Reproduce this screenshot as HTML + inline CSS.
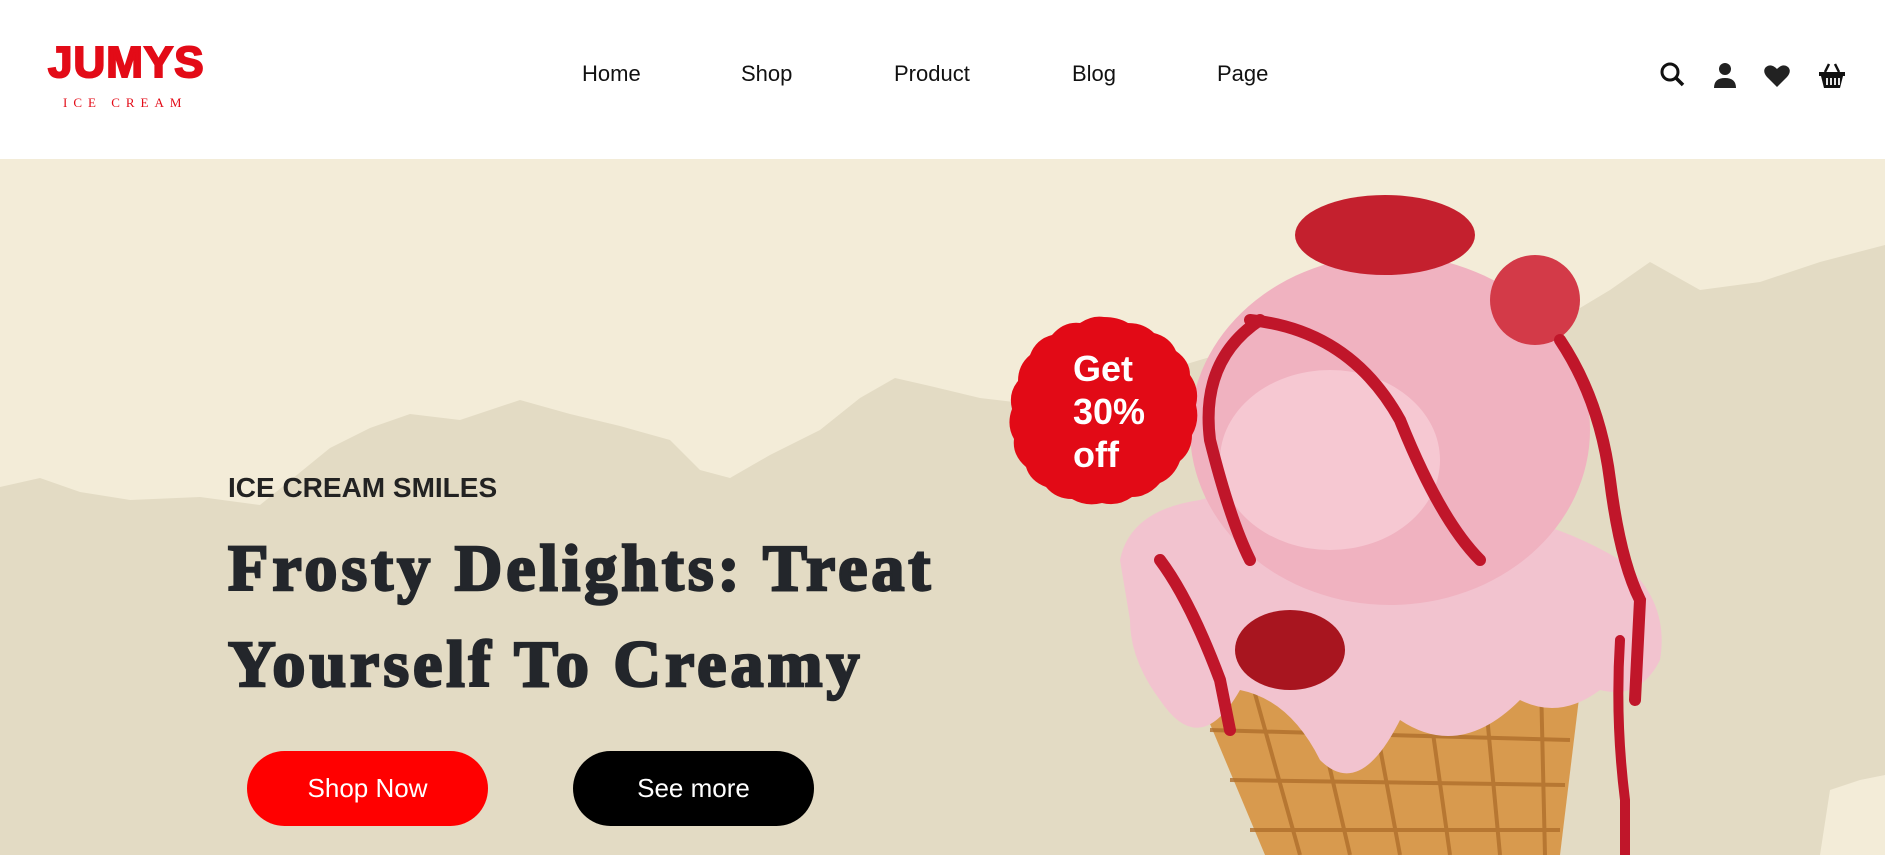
<!DOCTYPE html>
<html><head><meta charset="utf-8"><style>
*{margin:0;padding:0;box-sizing:border-box}
body{width:1885px;height:855px;overflow:hidden;background:#fff;font-family:"Liberation Sans",sans-serif;position:relative}
.hdr{position:absolute;left:0;top:0;width:1885px;height:159px;background:#fff}
.nav a{position:absolute;top:61px;font-size:22px;color:#111;text-decoration:none}
.logo1{position:absolute;left:48px;top:38px;font-family:"Liberation Sans",sans-serif;font-weight:900;font-size:44px;color:#e30b17;letter-spacing:1px;-webkit-text-stroke:2px #e30b17}
.logo2{position:absolute;left:63px;top:95px;font-family:"Liberation Serif",serif;font-size:13px;color:#e30b17;letter-spacing:6px}
.hero{position:absolute;left:0;top:159px;width:1885px;height:696px;background:#f3ecd8;overflow:hidden}
.sub{position:absolute;left:228px;top:313px;font-size:28px;font-weight:bold;color:#222}
.h1{position:absolute;left:228px;font-family:"Liberation Serif",serif;font-weight:bold;font-size:66px;color:#23262b;letter-spacing:4px;-webkit-text-stroke:2.5px #23262b;white-space:nowrap}
.btn{position:absolute;top:751px;width:241px;height:75px;border-radius:38px;color:#fff;font-size:26px;display:flex;align-items:center;justify-content:center}
.badge{position:absolute;left:1073px;font-size:36px;font-weight:bold;color:#fff;line-height:43px}
</style></head><body>
<div class="hdr">
<div class="logo1">JUMYS</div>
<div class="logo2">ICE CREAM</div>
<div class="nav">
<a style="left:582px">Home</a><a style="left:741px">Shop</a><a style="left:894px">Product</a><a style="left:1072px">Blog</a><a style="left:1217px">Page</a>
</div>
<svg style="position:absolute;left:1655px;top:58px" width="200" height="34" viewBox="0 0 200 34">
<circle cx="15" cy="14" r="8" fill="none" stroke="#111" stroke-width="3"/><line x1="21" y1="20" x2="28" y2="27" stroke="#111" stroke-width="3.5"/>
<circle cx="70" cy="11" r="6" fill="#222"/><path d="M59 30 Q59 20 70 20 Q81 20 81 30 Z" fill="#222"/>
<path d="M122 29 L112 19 Q107 13 111 9 Q116 5 122 11 Q128 5 133 9 Q137 13 132 19 Z" fill="#222"/>
<path d="M170 14 L174 6 M184 14 L180 6" stroke="#111" stroke-width="2.5"/>
<path d="M164 14 H190 V18 H188 L185 30 H169 L166 18 H164 Z" fill="#111"/>
<path d="M172 20 V27 M176 20 V27 M180 20 V27 M184 20 V27" stroke="#fff" stroke-width="1.8"/>
</svg>
</div>
<div class="hero">
<svg style="position:absolute;left:0;top:0" width="1885" height="696" viewBox="0 159 1885 696">
<path d="M0 487 L40 478 L80 492 L130 500 L200 497 L260 505 L330 448 L370 428 L410 414 L460 420 L520 400 L570 414 L620 426 L670 440 L700 470 L730 478 L770 455 L820 430 L860 398 L895 378 L930 386 L980 398 L1040 405 L1100 390 L1200 360 L1400 300 L1560 320 L1610 290 L1650 262 L1700 290 L1760 282 L1820 262 L1885 245 L1885 855 L0 855 Z" fill="#e3dbc4"/>
<path d="M1820 855 L1830 790 L1860 780 L1885 775 L1885 855 Z" fill="#f3ecd8"/>
<path d="M1180 630 L1560 640 L1580 690 L1560 855 L1265 855 L1200 700 Z" fill="#d89a4e"/>
<g stroke="#b06f2c" stroke-width="4" opacity="0.8">
<path d="M1190 680 L1570 700 M1210 730 L1570 740 M1230 780 L1565 785 M1250 830 L1560 830"/>
<path d="M1240 640 L1300 855 M1300 640 L1350 855 M1360 640 L1400 855 M1420 640 L1450 855 M1480 640 L1500 855 M1540 640 L1545 855"/>
</g>
<path d="M1120 560 Q1130 510 1200 500 Q1300 470 1400 510 Q1520 500 1620 560 Q1670 600 1660 660 Q1640 700 1600 690 Q1560 720 1520 700 Q1460 760 1400 720 Q1360 800 1320 760 Q1290 700 1240 690 Q1200 760 1160 700 Q1130 660 1130 620 Z" fill="#f2c3cf"/>
<ellipse cx="1390" cy="430" rx="200" ry="175" fill="#f0b2c0"/>
<ellipse cx="1330" cy="460" rx="110" ry="90" fill="#f6c8d2"/>
<ellipse cx="1385" cy="235" rx="90" ry="40" fill="#c4202e"/>
<ellipse cx="1535" cy="300" rx="45" ry="45" fill="#d33a48"/>
<ellipse cx="1290" cy="650" rx="55" ry="40" fill="#a8151f"/>
<g fill="none" stroke="#c0162a" stroke-width="12" stroke-linecap="round">
<path d="M1260 320 Q1200 360 1210 440 Q1230 520 1250 560"/>
<path d="M1250 320 Q1350 330 1400 420 Q1440 520 1480 560"/>
<path d="M1560 340 Q1600 400 1610 480 Q1620 560 1640 600 L1635 700"/>
<path d="M1160 560 Q1190 600 1220 680 L1230 730"/>
<path d="M1620 640 Q1615 720 1625 800 L1625 855" stroke-width="10"/>
</g>
</svg>
<svg style="position:absolute;left:1008px;top:156px" width="192" height="192" viewBox="-96 -96 192 192">
<path d="M0 -94 Q14 -94 24 -88 Q40 -88 50 -78 Q66 -74 72 -60 Q86 -50 86 -36 Q96 -22 92 -6 Q96 10 88 24 Q88 40 76 50 Q70 66 56 72 Q44 86 28 86 Q14 96 -2 92 Q-18 96 -32 88 Q-48 88 -58 76 Q-74 70 -78 56 Q-92 44 -90 28 Q-98 14 -92 -2 Q-96 -18 -86 -30 Q-86 -46 -74 -56 Q-68 -72 -52 -76 Q-40 -90 -24 -88 Q-12 -96 0 -94 Z" fill="#e20a16"/>
</svg>
<div class="badge" style="top:188px">Get<br>30%<br>off</div>
<div class="sub">ICE CREAM SMILES</div>
<div class="h1" style="top:372px">Frosty Delights: Treat</div>
<div class="h1" style="top:468px">Yourself To Creamy</div>
</div>
<div class="btn" style="left:247px;background:#ff0000">Shop Now</div>
<div class="btn" style="left:573px;background:#000">See more</div>
</body></html>
